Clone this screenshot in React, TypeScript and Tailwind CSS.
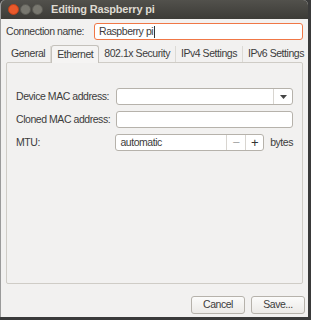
export default function App() {
  const font = "font-['Liberation_Sans',Arial,sans-serif]";
  const tabs = ["General", "Ethernet", "802.1x Security", "IPv4 Settings", "IPv6 Settings"];

  return (
    <div className={`w-[311px] h-[320px] bg-[#3a3a3a] overflow-hidden ${font} text-[10.5px] tracking-[-0.45px] whitespace-nowrap text-[#3c3c3c]`}>
      <div className="w-[308px] h-[317px] flex flex-col bg-[#f2f1f0] rounded-t-[5px] overflow-hidden border-l border-[#9a9a9a]">
        {/* Title bar */}
        <div className="h-[19px] flex items-center bg-gradient-to-b from-[#52514c] to-[#3c3b37] px-[7px] shrink-0">
          <div className="flex items-center gap-[1px]">
            <span className="w-[11px] h-[11px] rounded-full bg-[#e9592b] border border-[#b8411c]" />
            <span className="w-[11px] h-[11px] rounded-full bg-[#78776f] border border-[#5a5953]" />
            <span className="w-[11px] h-[11px] rounded-full bg-[#78776f] border border-[#5a5953]" />
          </div>
          <span className="ml-[8px] text-[11px] tracking-[-0.2px] font-bold text-[#dfdbd2]">Editing Raspberry pi</span>
        </div>

        {/* Connection name */}
        <div className="flex items-center px-[5px] mt-[4px] gap-[10px]">
          <span>Connection name:</span>
          <div className="flex-1 h-[17px] rounded-[3px] border border-[#f07746] bg-white flex items-center px-[4px]">
            Raspberry pi<span className="w-px h-[12px] bg-[#333] ml-px" />
          </div>
        </div>

        {/* Tabs */}
        <div className="flex items-end px-[5px] mt-[5px] h-[17px]">
          {tabs.map((t, i) =>
            i === 1 ? (
              <div
                key={t}
                className="h-[18px] px-[5px] flex items-center bg-[#f5f4f3] border border-b-0 border-[#c4c1bb] rounded-t-[3px] relative top-px z-10"
              >
                {t}
              </div>
            ) : (
              <div key={t} className="h-[16px] px-[5px] flex items-center border-r border-[#dcdad5] last:border-r-0">
                {t}
              </div>
            )
          )}
        </div>

        {/* Panel */}
        <div className="mx-[5px] h-[222px] border border-[#cfccc6] rounded-[2px] bg-[#f2f1f0] flex flex-col pt-[25px] px-[9px] gap-[6px]">
          <div className="flex items-center">
            <span className="w-[101px]">Device MAC address:</span>
            <div className="w-[180px] h-[17px] rounded-[3px] border border-[#b6b2ab] bg-white flex items-center justify-end">
              <div className="w-[19px] h-full border-l border-[#d8d5d0] flex items-center justify-center">
                <svg width="7" height="4" viewBox="0 0 7 4">
                  <path d="M0 0h7L3.5 4z" fill="#444" />
                </svg>
              </div>
            </div>
          </div>
          <div className="flex items-center">
            <span className="w-[101px]">Cloned MAC address:</span>
            <div className="w-[180px] h-[17px] rounded-[3px] border border-[#b6b2ab] bg-white" />
          </div>
          <div className="flex items-center">
            <span className="w-[101px]">MTU:</span>
            <div className="w-[151px] h-[17px] rounded-[3px] border border-[#b6b2ab] bg-white flex items-center">
              <span className="flex-1 pl-[4px]">automatic</span>
              <div className="w-[19px] h-full border-l border-[#d8d5d0] flex items-center justify-center text-[#aaa] text-[13px] leading-none">
                −
              </div>
              <div className="w-[18px] h-full border-l border-[#d8d5d0] flex items-center justify-center text-[#333] text-[13px] leading-none">
                +
              </div>
            </div>
            <span className="ml-[6px]">bytes</span>
          </div>
        </div>

        {/* Buttons */}
        <div className="flex justify-end gap-[6px] px-[3px] mt-[12px]">
          <button className="w-[54px] h-[18px] rounded-[3px] border border-[#b6b2ab] bg-gradient-to-b from-[#fbfbfa] to-[#eceae7] flex items-center justify-center">
            Cancel
          </button>
          <button className="w-[54px] h-[18px] rounded-[3px] border border-[#b6b2ab] bg-gradient-to-b from-[#fbfbfa] to-[#eceae7] flex items-center justify-center">
            Save...
          </button>
        </div>
      </div>
    </div>
  );
}
